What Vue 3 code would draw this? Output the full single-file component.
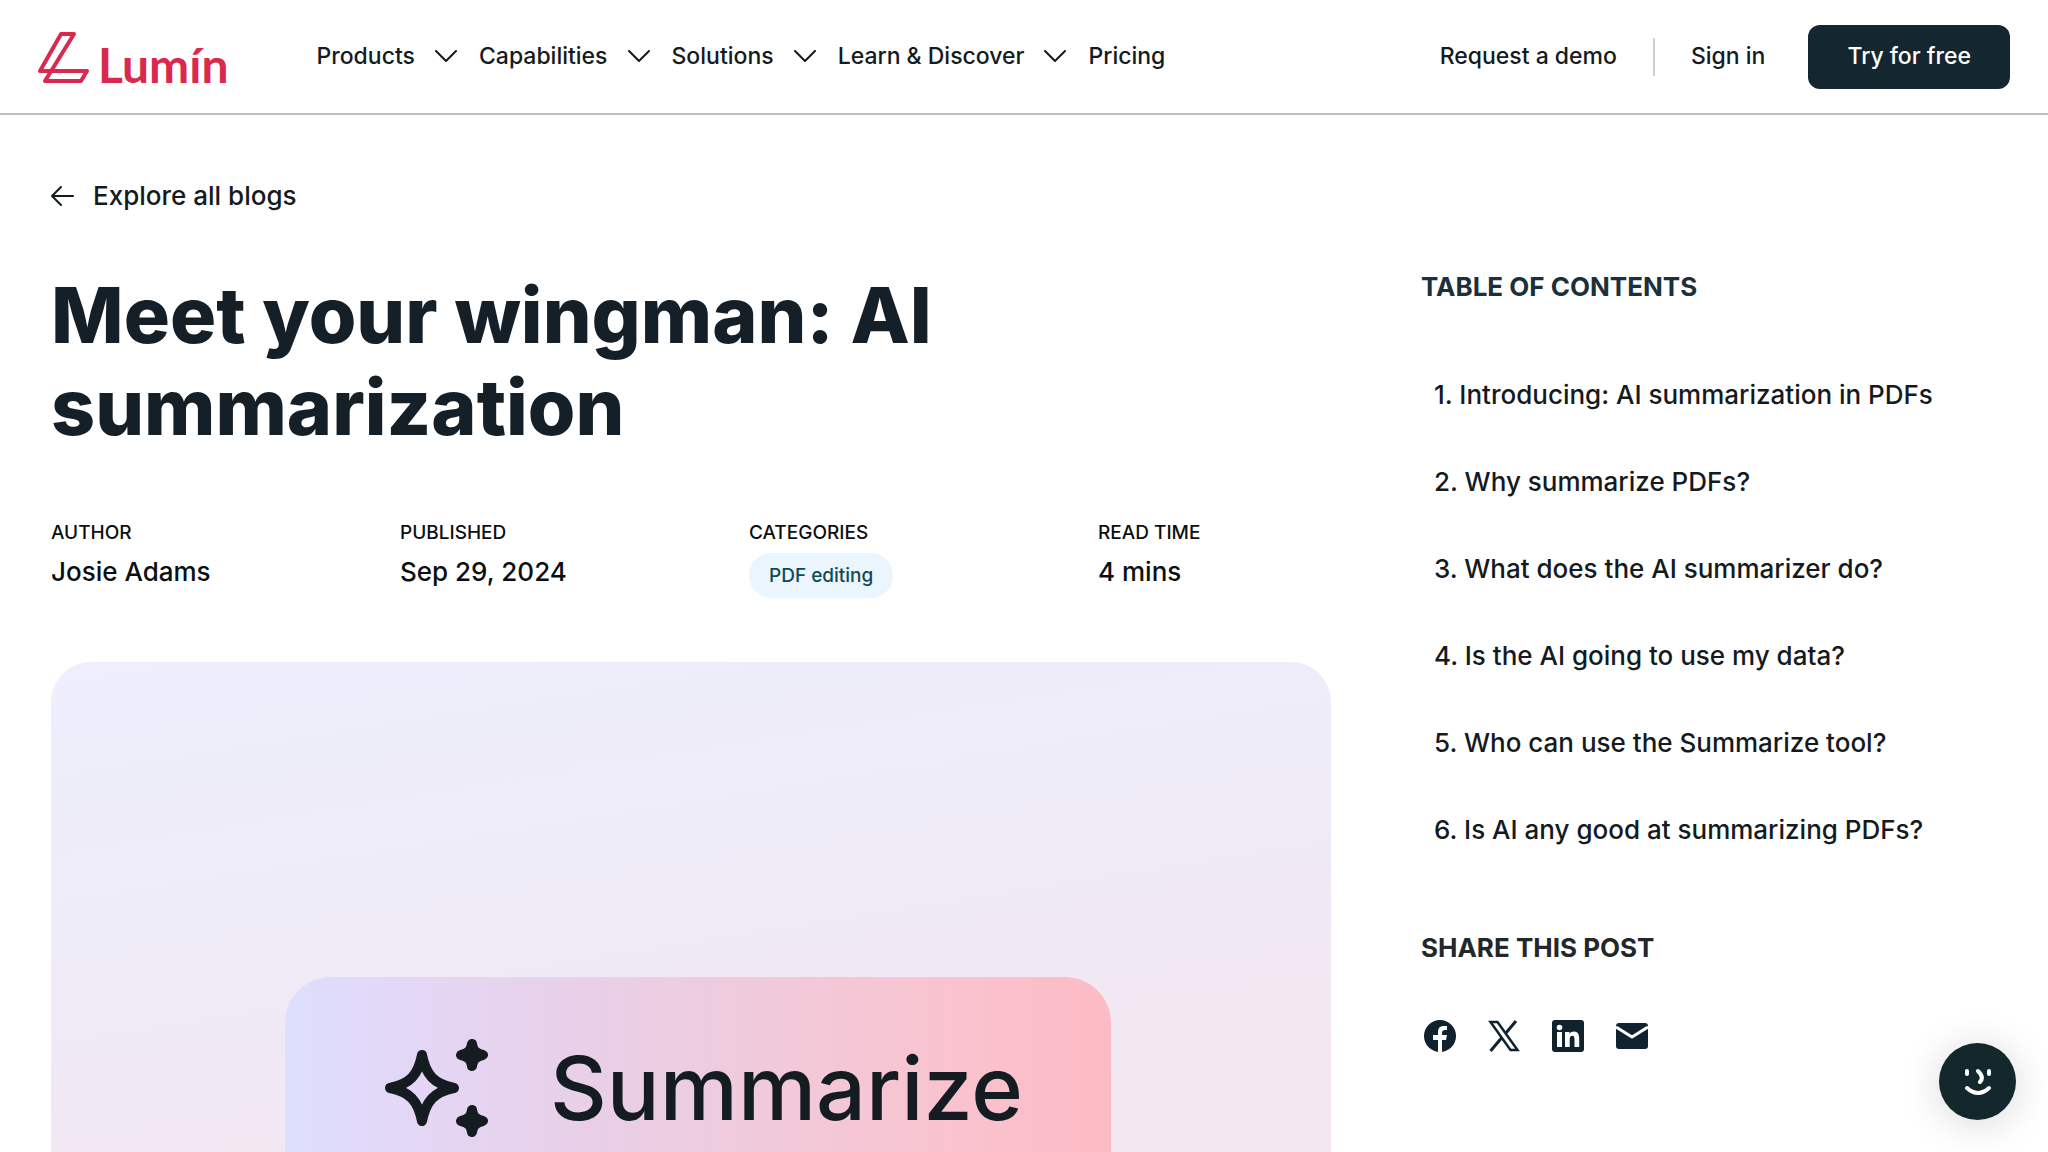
<template>
  <div class="page">
    <header class="site-header">
      <a class="logo" href="#" aria-label="Lumin home">
        <svg class="logo-mark" viewBox="0 0 52 52" aria-hidden="true">
          <path d="M23 3H36L7 50H43L49 40H2Z" />
        </svg>
        <span class="logo-name">Lumín</span>
      </a>

      <nav class="main-nav">
        <template v-for="item in navItems" :key="item.label">
          <button v-if="item.menu" type="button" class="nav-item">
            {{ item.label }}
            <svg class="chevron" viewBox="0 0 22 12" aria-hidden="true">
              <path d="M1 1L11 11L21 1" />
            </svg>
          </button>
          <a v-else class="nav-item" href="#">{{ item.label }}</a>
        </template>
      </nav>

      <div class="account">
        <a class="account-link" href="#">Request a demo</a>
        <a class="account-link sign-in" href="#">Sign in</a>
        <button type="button" class="try-btn">Try for free</button>
      </div>
    </header>

    <main class="content">
      <article class="post">
        <a class="back-link" href="#">
          <svg class="back-icon" viewBox="0 0 24 22" aria-hidden="true">
            <path d="M22 11H1M10 2L1 11L10 20" />
          </svg>
          Explore all blogs
        </a>

        <h1 class="title">Meet your wingman: AI summarization</h1>

        <dl class="meta">
          <div v-for="info in meta" :key="info.label" class="meta-item">
            <dt class="meta-label">{{ info.label }}</dt>
            <dd class="meta-value">
              <a v-if="info.tag" class="tag" href="#">{{ info.value }}</a>
              <template v-else>{{ info.value }}</template>
            </dd>
          </div>
        </dl>

        <div class="hero">
          <div class="summarize-card">
            <svg class="sparkles" viewBox="0 0 104 98" aria-hidden="true">
              <path class="star-outline" d="M38 16C42 36 50 45 70 49C50 53 42 62 38 82C34 62 26 53 6 49C26 45 34 36 38 16Z" />
              <path class="star-solid" d="M88 5C89 12 92 14 99 16C92 18 89 20 88 27C87 20 84 18 77 16C84 14 87 12 88 5Z" />
              <path class="star-solid" d="M88 71C89 78 92 80 99 82C92 84 89 86 88 93C87 86 84 84 77 82C84 80 87 78 88 71Z" />
            </svg>
            <span>Summarize</span>
          </div>
        </div>
      </article>

      <aside class="sidebar">
        <h2 class="side-title toc-title">TABLE OF CONTENTS</h2>
        <ol class="toc">
          <li v-for="(entry, i) in toc" :key="entry">
            <a href="#">{{ i + 1 }}. {{ entry }}</a>
          </li>
        </ol>

        <h2 class="side-title">SHARE THIS POST</h2>
        <div class="share">
          <a href="#" aria-label="Facebook">
            <svg viewBox="0 0 32 32">
              <circle cx="16" cy="16" r="16" />
              <path class="cut" d="M14 32V20H9V15H14V12C14 8 16 6 20 6H23V10H21C19 10 18 11 18 13V15H23L22 20H18V32Z" />
            </svg>
          </a>
          <a href="#" aria-label="X">
            <svg viewBox="0 0 32 32">
              <path class="x-bar" d="M2.5 2H9.5L29.5 30H22.5Z" />
              <path class="x-line" d="M28 1L17.5 13.5M13.5 18L2.5 31" />
            </svg>
          </a>
          <a href="#" aria-label="LinkedIn">
            <svg viewBox="0 0 32 32">
              <rect width="32" height="32" rx="3" />
              <circle class="cut" cx="7.5" cy="7.5" r="2.8" />
              <path class="cut" d="M5 12H10V27H5ZM13 12H17.5V14C18.5 12.4 20.2 11.6 22 11.6C26 11.6 27.2 14.5 27.2 18.5V27H22.5V19.5C22.5 17 22 15.7 20.3 15.7C18.4 15.7 17.7 17 17.7 19.5V27H13Z" />
            </svg>
          </a>
          <a href="#" aria-label="Email">
            <svg viewBox="0 0 32 32">
              <rect y="3" width="32" height="26" rx="3" />
              <path class="mail-fold" d="M0 7L16 17L32 7" />
            </svg>
          </a>
        </div>
      </aside>
    </main>

    <button type="button" class="chat-btn" aria-label="Open chat">
      <svg viewBox="0 0 28 28" aria-hidden="true">
        <path d="M3 3V6M25 3V6M14 3C18 7 19 11 16 14M3 20Q14 30 25 20" />
      </svg>
    </button>
  </div>
</template>

<script setup>
const navItems = [
  { label: 'Products', menu: true },
  { label: 'Capabilities', menu: true },
  { label: 'Solutions', menu: true },
  { label: 'Learn & Discover', menu: true },
  { label: 'Pricing', menu: false }
]

const meta = [
  { label: 'AUTHOR', value: 'Josie Adams' },
  { label: 'PUBLISHED', value: 'Sep 29, 2024' },
  { label: 'CATEGORIES', value: 'PDF editing', tag: true },
  { label: 'READ TIME', value: '4 mins' }
]

const toc = [
  'Introducing: AI summarization in PDFs',
  'Why summarize PDFs?',
  'What does the AI summarizer do?',
  'Is the AI going to use my data?',
  'Who can use the Summarize tool?',
  'Is AI any good at summarizing PDFs?'
]
</script>

<style>
body { margin: 0; background: #fff; }
</style>

<style scoped>
.page { display: flex; flex-direction: column; height: 100vh; overflow: hidden; font-family: Inter, "Liberation Sans", sans-serif; font-weight: 500; color: #141a1e; }
.page * { box-sizing: border-box; }
a { color: inherit; text-decoration: none; }
button { font: inherit; color: inherit; border: 0; background: none; padding: 0; cursor: pointer; }
svg { display: block; flex-shrink: 0; }

.site-header { display: flex; align-items: center; flex-shrink: 0; padding: 25px 38px 24px; border-bottom: 2px solid #bcc0c0; font-size: 23px; line-height: 28px; white-space: nowrap; }
.logo { display: flex; align-items: flex-end; gap: 8px; color: #d9294f; }
.logo-mark { width: 52px; height: 52px; fill: none; stroke: currentColor; stroke-width: 4; stroke-linejoin: round; }
.logo-name { font-family: Lato, sans-serif; font-size: 48px; font-weight: 700; line-height: 36px; }
.main-nav { display: flex; gap: 22px; margin-left: 88px; padding-bottom: 2px; }
.nav-item { display: flex; align-items: center; gap: 20px; }
.chevron { width: 22px; height: 12px; fill: none; stroke: currentColor; stroke-width: 2; stroke-linecap: round; stroke-linejoin: round; }
.account { display: flex; align-items: center; margin-left: auto; }
.account-link { padding-bottom: 2px; }
.sign-in { margin-left: 36px; border-left: 2px solid #cdcfd0; padding: 4px 43px 6px 36px; }
.try-btn { height: 64px; padding: 0 39px 2px; border-radius: 12px; background: #142630; color: #fff; }

.content { display: grid; grid-template-columns: minmax(0, 20fr) minmax(0, 9fr); gap: 90px; flex: 1; min-height: 0; padding: 0 51px; }
.post { display: flex; flex-direction: column; min-height: 0; padding-top: 65px; }
.back-link { display: flex; align-items: center; gap: 18px; font-size: 26px; line-height: 32px; }
.back-icon { width: 24px; height: 22px; fill: none; stroke: currentColor; stroke-width: 2; stroke-linecap: round; stroke-linejoin: round; }
.title { max-width: 1000px; margin: 57px 0 0; font-size: 77px; font-weight: 800; line-height: 92px; color: #141f27; }
.meta { display: grid; grid-template-columns: repeat(4, 1fr); gap: 116px; margin: 67px 0 0; height: 78px; color: #0c0f11; }
.meta-item { white-space: nowrap; }
.meta-label { font-size: 19px; line-height: 26px; }
.meta-value { margin: 7px 0 0; font-size: 26px; line-height: 38px; }
.tag { display: block; width: max-content; padding: 0 20px; border-radius: 22px; background: #eaf5fd; color: #0f4a55; font-size: 19px; line-height: 45px; }

.hero { flex: 1; min-height: 0; margin-top: 64px; padding: 315px 220px 0 234px; overflow: hidden; border-radius: 40px 40px 0 0; background: linear-gradient(171deg, #efeefe 0%, #ededf9 20%, #eeecf8 42%, #f0e9f5 60%, #f2e8f2 80%, #f3e7f1 100%); }
.summarize-card { display: flex; align-items: center; gap: 62px; height: 222px; padding: 0 99px; border-radius: 46px; background: linear-gradient(90deg, #dddffd 0%, #e3d8f8 12%, #e8d0e8 35%, #f0cadb 58%, #f9c3cf 80%, #fcbbc4 100%); font-size: 88px; color: #141c22; }
.sparkles { width: 104px; height: 98px; stroke: currentColor; stroke-width: 10; stroke-linecap: round; stroke-linejoin: round; }
.star-outline { fill: none; }
.star-solid { fill: currentColor; }

.sidebar { padding-top: 156px; }
.side-title { margin: 0; font-size: 26px; font-weight: 700; line-height: 32px; color: #23272a; }
.toc-title { color: #1b303b; }
.toc { display: grid; gap: 55px; margin: 76px 0 0; padding: 0 0 0 13px; list-style: none; font-size: 26px; line-height: 32px; white-space: nowrap; }
.toc + .side-title { margin-top: 86px; }
.share { display: flex; gap: 32px; margin-top: 56px; padding-left: 3px; }
.share svg { width: 32px; height: 32px; fill: #10222e; }
.share .cut { fill: #fff; }
.share .x-bar { fill: none; stroke: #10222e; stroke-width: 2.5; }
.share .x-line { fill: none; stroke: #10222e; stroke-width: 3; }
.share .mail-fold { fill: none; stroke: #fff; stroke-width: 3; }

.chat-btn { position: fixed; right: 32px; bottom: 32px; display: grid; place-items: center; width: 77px; height: 77px; border-radius: 50%; background: #13282d; box-shadow: 0 4px 40px rgba(0, 0, 0, 0.16); }
.chat-btn svg { width: 28px; height: 28px; fill: none; stroke: #fff; stroke-width: 4; stroke-linecap: round; }
</style>
